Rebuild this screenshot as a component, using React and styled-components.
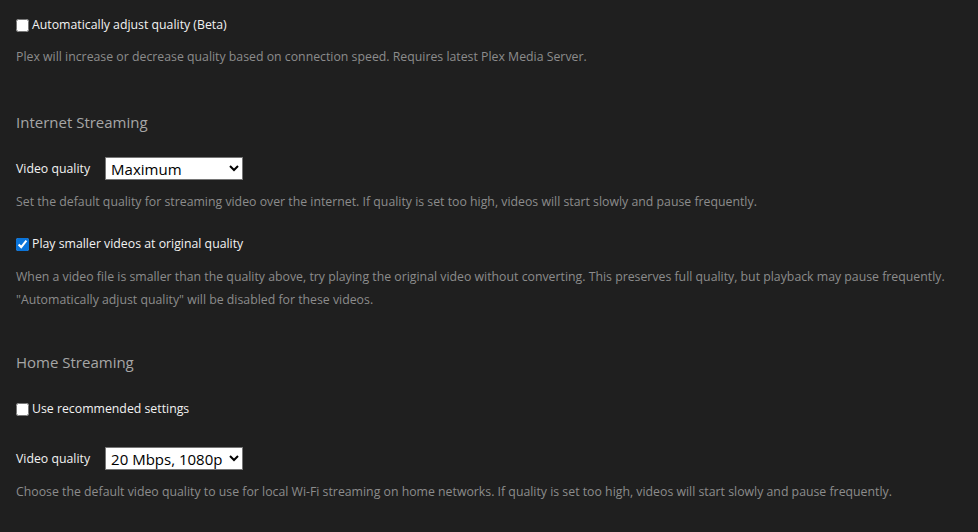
import React from "react";
import styled, { createGlobalStyle } from "styled-components";

const Global = createGlobalStyle`
  html, body { margin: 0; padding: 0; background: #1f1f1f; }
  body { font-family: "Open Sans", "Noto Sans", sans-serif; }
`;

const Page = styled.div`
  background: #1f1f1f;
  min-height: 532px;
  padding: 15px 16px 0 16px;
  box-sizing: border-box;
  color: #eee;
`;

const Section = styled.section`
  display: flex;
  flex-direction: column;
  margin-top: ${(p) => p.$top || 0}px;
`;

const Heading = styled.h2`
  margin: 0 0 24px 0;
  font-size: 15px;
  font-weight: 400;
  color: #a6a6a6;
  line-height: 20px;
`;

const CheckRow = styled.label`
  display: flex;
  align-items: center;
  gap: 3px;
  font-size: 12.3px;
  font-weight: 500;
  color: #f2f2f2;
  line-height: 20px;
  height: 20px;
  margin-top: ${(p) => p.$mt || 0}px;
`;

const Box = styled.input`
  margin: 0;
  width: 13px;
  height: 13px;
  accent-color: #0a74da;
`;

const Desc = styled.p`
  margin: ${(p) => p.$mt ?? 12}px 0 0 0;
  font-size: 12.3px;
  line-height: 23px;
  color: #8c8c8c;
`;

const FieldRow = styled.div`
  display: flex;
  align-items: center;
  gap: 15px;
  height: 24px;
  margin-top: ${(p) => p.$mt || 0}px;
`;

const FieldLabel = styled.span`
  font-size: 12.3px;
  font-weight: 500;
  color: #f2f2f2;
`;

const Select = styled.select`
  width: 138px;
  height: 23px;
  font-family: "Open Sans", "Noto Sans", sans-serif;
  font-size: 15px;
  color: #000;
  background: #fff;
  border: 1px solid #767676;
  border-radius: 0;
  padding: 0 0 0 1px;
`;

export default function App() {
  return (
    <>
      <Global />
      <Page>
        <Section>
          <CheckRow>
            <Box type="checkbox" />
            Automatically adjust quality (Beta)
          </CheckRow>
          <Desc $mt={10}>
            Plex will increase or decrease quality based on connection speed. Requires latest Plex Media Server.
          </Desc>
        </Section>

        <Section $top={44}>
          <Heading>Internet Streaming</Heading>
          <FieldRow>
            <FieldLabel>Video quality</FieldLabel>
            <Select defaultValue="max">
              <option value="max">Maximum</option>
              <option value="20">20 Mbps, 1080p</option>
            </Select>
          </FieldRow>
          <Desc $mt={10}>
            Set the default quality for streaming video over the internet. If quality is set too high, videos will start slowly and pause frequently.
          </Desc>
          <CheckRow $mt={21}>
            <Box type="checkbox" defaultChecked />
            Play smaller videos at original quality
          </CheckRow>
          <Desc $mt={11}>
            When a video file is smaller than the quality above, try playing the original video without converting. This preserves full quality, but playback may pause frequently.
            <br />
            "Automatically adjust quality" will be disabled for these videos.
          </Desc>
        </Section>

        <Section $top={41}>
          <Heading>Home Streaming</Heading>
          <CheckRow $mt={3}>
            <Box type="checkbox" />
            Use recommended settings
          </CheckRow>
          <FieldRow $mt={27}>
            <FieldLabel>Video quality</FieldLabel>
            <Select defaultValue="20">
              <option value="max">Maximum</option>
              <option value="20">20 Mbps, 1080p</option>
            </Select>
          </FieldRow>
          <Desc $mt={10}>
            Choose the default video quality to use for local Wi-Fi streaming on home networks. If quality is set too high, videos will start slowly and pause frequently.
          </Desc>
        </Section>
      </Page>
    </>
  );
}
